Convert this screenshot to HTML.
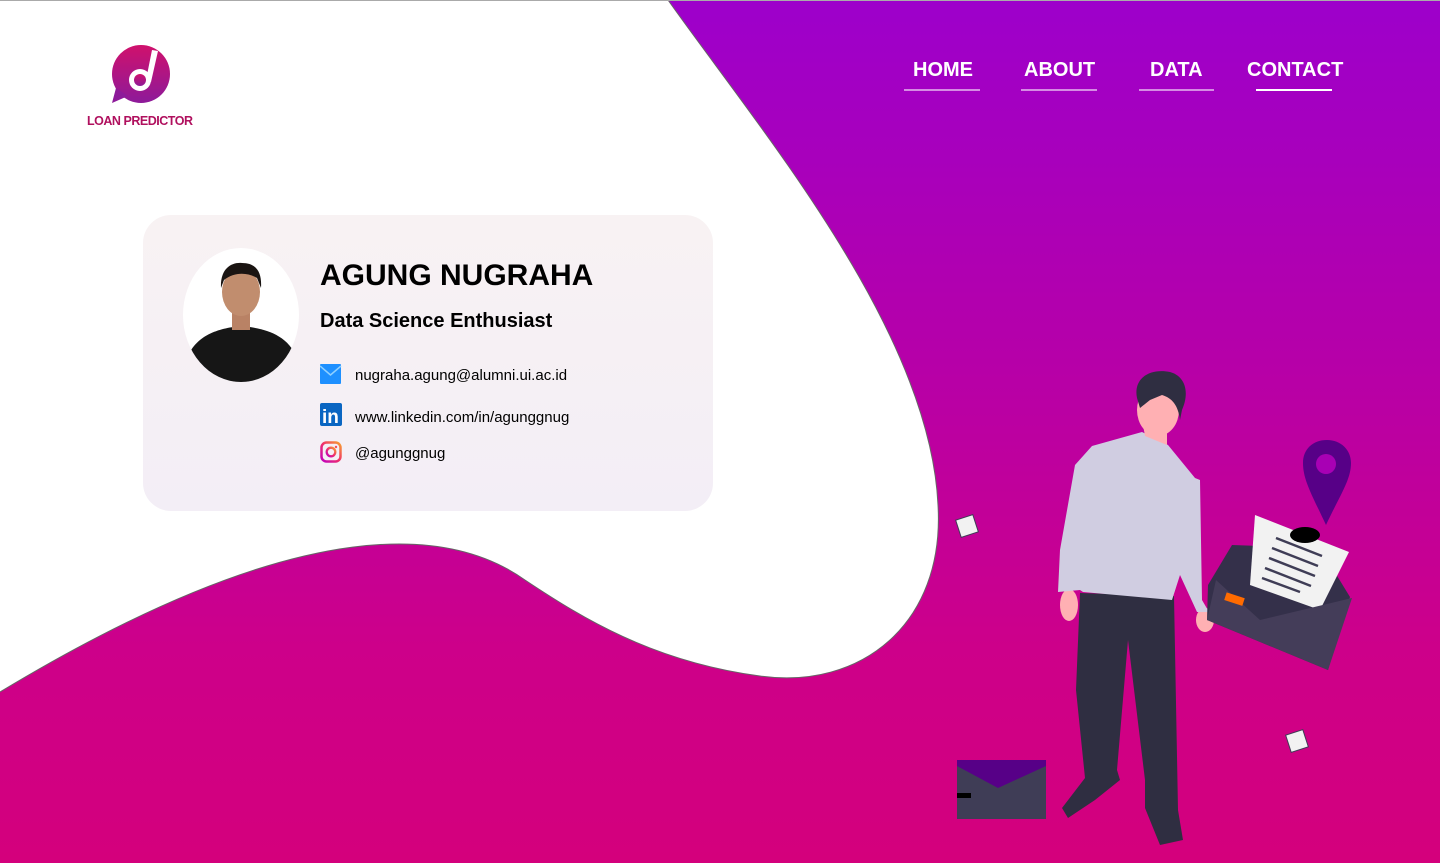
<!DOCTYPE html>
<html><head><meta charset="utf-8"><style>
html,body{margin:0;padding:0}
body{width:1440px;height:863px;overflow:hidden;position:relative;font-family:"Liberation Sans",Arial,sans-serif;background:linear-gradient(180deg,#9d00cb 0%,#b500aa 40%,#cd008a 75%,#d4007c 100%)}
svg.bg{position:absolute;left:0;top:0}
.nav{position:absolute;top:59px;color:#fff;font-weight:bold;font-size:20px}
.nav a{position:absolute;color:#fff;text-decoration:none;white-space:nowrap}
.nav span{position:absolute;height:2px;background:rgba(255,255,255,.55);top:30px}
.card{position:absolute;left:143px;top:215px;width:570px;height:296px;border-radius:28px;background:linear-gradient(180deg,#f8f2f3,#f3eef6)}
.name{position:absolute;left:320px;top:259px;font-size:30px;font-weight:bold;color:#000}
.role{position:absolute;left:320px;top:310px;font-size:20px;font-weight:bold;color:#000}
.row{position:absolute;left:355px;font-size:15px;color:#000}
</style></head><body>
<svg class="bg" width="1440" height="863">
<path d="M0,0 L668,0 C760,130 930,330 938,505 C945,625 860,690 760,676 C655,662 585,620 525,580 C455,530 310,505 0,692 Z" fill="#fff"/>
<path d="M668,0 C760,130 930,330 938,505 C945,625 860,690 760,676 C655,662 585,620 525,580 C455,530 310,505 0,692" fill="none" stroke="#666" stroke-width="1"/>
<line x1="0" y1="0.5" x2="1440" y2="0.5" stroke="#aaa"/>
<defs><linearGradient id="lg" x1="0" y1="0" x2="0" y2="1"><stop offset="0" stop-color="#d0116c"/><stop offset="1" stop-color="#8d1a9a"/></linearGradient></defs>
<circle cx="141" cy="74" r="29" fill="url(#lg)"/>
<path d="M116,88 L112,103 L128,96 Z" fill="#8d1a9a"/>
<circle cx="140" cy="80" r="11" fill="#fff"/>
<path d="M146,80 L152,50 L158,51 L151,82 Z" fill="#fff"/>
<circle cx="140" cy="80" r="6" fill="url(#lg)"/>
<text x="87" y="125" font-family="Liberation Sans" font-weight="bold" font-size="12.5" fill="#b0105e" textLength="106">LOAN PREDICTOR</text>
<rect x="958" y="517" width="18" height="18" fill="#f2f2f2" stroke="#3f3d56" stroke-width="1" transform="rotate(-18 967 526)"/>
<rect x="1288" y="732" width="18" height="18" fill="#f2f2f2" stroke="#3f3d56" stroke-width="1" transform="rotate(-18 1297 741)"/>
<rect x="957" y="760" width="89" height="59" fill="#3f3d56"/>
<path d="M957,760 L1046,760 L1046,766 L998,788 L957,766 Z" fill="#570087"/>
<rect x="957" y="793" width="14" height="5" fill="#000"/>
<path d="M1326,525 C1312,495 1303,480 1303,463 C1303,449 1313,440 1327,440 C1341,440 1351,450 1351,463 C1351,480 1340,495 1326,525 Z" fill="#570087"/>
<circle cx="1326" cy="464" r="10" fill="#a800b4"/>
<path d="M1080,593 L1174,596 L1178,810 L1183,840 L1160,845 L1145,808 L1145,780 L1128,640 L1117,770 L1120,780 L1095,800 L1068,818 L1062,808 L1085,778 L1076,690 Z" fill="#2f2e41"/>
<ellipse cx="1069" cy="605" rx="9" ry="16" fill="#ffb0b3"/>
<ellipse cx="1205" cy="620" rx="9" ry="12" fill="#ffb0b3"/>
<path d="M1142,432 L1168,445 L1195,478 L1200,480 L1202,600 L1209,612 L1197,612 L1180,575 L1172,600 L1083,592 L1080,590 L1058,592 L1060,550 L1075,465 L1092,446 Z" fill="#d0cde1"/>
<path d="M1143,425 L1167,425 L1167,445 L1145,436 Z" fill="#ffb0b3"/>
<ellipse cx="1158" cy="410" rx="21" ry="26" fill="#ffb0b3"/>
<path d="M1137,398 C1133,378 1150,368 1170,372 C1185,376 1190,392 1182,410 L1180,420 C1178,405 1172,398 1162,395 L1150,400 L1140,408 Z" fill="#2f2e41"/>
<path d="M1208,585 L1232,545 L1320,548 L1350,597 L1328,670 L1207,620 Z" fill="#34304a"/>
<path d="M1255,515 L1349,552 L1320,610 L1250,585 Z" fill="#f2f2f2"/>
<ellipse cx="1305" cy="535" rx="15" ry="8" fill="#000"/>
<g stroke="#3f3d56" stroke-width="2.5"><line x1="1276" y1="538" x2="1322" y2="556"/><line x1="1272" y1="548" x2="1318" y2="566"/><line x1="1269" y1="558" x2="1315" y2="576"/><line x1="1265" y1="568" x2="1311" y2="586"/><line x1="1262" y1="578" x2="1300" y2="592"/></g>
<path d="M1216,580 L1260,620 L1352,598 L1328,670 L1207,620 Z" fill="#443d59"/>
<rect x="1225" y="595" width="19" height="8" fill="#ff6b00" transform="rotate(18 1234 599)"/>
</svg>
<div class="nav">
<a style="left:913px">HOME</a><span style="left:904px;width:76px"></span>
<a style="left:1024px">ABOUT</a><span style="left:1021px;width:76px"></span>
<a style="left:1150px">DATA</a><span style="left:1139px;width:75px"></span>
<a style="left:1247px">CONTACT</a><span style="left:1256px;width:76px;background:#fff"></span>
</div>
<div class="card"></div>
<svg style="position:absolute;left:182px;top:248px" width="118" height="135">
<ellipse cx="59" cy="67" rx="58" ry="67" fill="#fff"/>
<clipPath id="c"><ellipse cx="59" cy="67" rx="58" ry="67"/></clipPath>
<g clip-path="url(#c)">
<path d="M5,110 C15,85 40,80 59,78 C80,80 105,85 115,110 L115,140 L5,140 Z" fill="#161616"/>
<rect x="50" y="62" width="18" height="20" fill="#b98265"/>
<ellipse cx="59" cy="44" rx="19" ry="24" fill="#c18d6e"/>
<path d="M39,40 C38,20 50,14 60,15 C75,15 80,25 79,40 L75,30 C65,24 52,24 42,32 Z" fill="#1a1412"/>
</g></svg>
<div class="name">AGUNG NUGRAHA</div>
<div class="role">Data Science Enthusiast</div>
<svg style="position:absolute;left:320px;top:364px" width="22" height="20"><rect width="21" height="20" rx="1" fill="#1e90ff"/><path d="M0,2 L10.5,11 L21,2" fill="none" stroke="#8fd0ff" stroke-width="1.5"/></svg>
<div class="row" style="top:367px">nugraha.agung@alumni.ui.ac.id</div>
<svg style="position:absolute;left:320px;top:403px" width="22" height="23"><rect width="22" height="23" rx="2" fill="#0a66c2"/><text x="2" y="20" font-family="Liberation Sans" font-weight="bold" font-size="19" fill="#fff">in</text></svg>
<div class="row" style="top:409px">www.linkedin.com/in/agunggnug</div>
<svg style="position:absolute;left:320px;top:441px" width="22" height="22"><defs><linearGradient id="ig" x1="0" y1="1" x2="1" y2="0"><stop offset="0" stop-color="#c000c0"/><stop offset=".5" stop-color="#f0306a"/><stop offset="1" stop-color="#f7a030"/></linearGradient></defs><rect x="1.5" y="1.5" width="19" height="19" rx="5" fill="none" stroke="url(#ig)" stroke-width="2.5"/><circle cx="11" cy="11" r="4.3" fill="none" stroke="url(#ig)" stroke-width="2.3"/><circle cx="16" cy="6" r="1.2" fill="#f05060"/></svg>
<div class="row" style="top:445px">@agunggnug</div>
</body></html>
